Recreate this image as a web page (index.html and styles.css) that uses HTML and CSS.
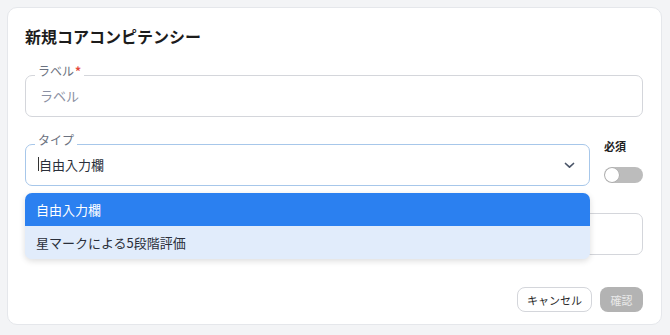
FILE: index.html
```html
<!DOCTYPE html>
<html lang="ja">
<head>
<meta charset="utf-8">
<link rel="stylesheet" href="styles.css">
</head>
<body>
<div class="card">
  <h1 class="title">新規コアコンピテンシー</h1>

  <div class="field">
    <span class="float-label">ラベル<span class="req">*</span></span>
    <span class="placeholder">ラベル</span>
  </div>

  <div class="type-row">
    <div class="field field-focus">
      <span class="float-label">タイプ</span>
      <span class="value"><span class="caret"></span>自由入力欄</span>
      <svg class="chevron" width="11" height="7" viewBox="0 0 11 7"><path d="M1.5 1.5 L5.5 5.2 L9.5 1.5" fill="none" stroke="#4a5568" stroke-width="1.7" stroke-linecap="round" stroke-linejoin="round"/></svg>
      <div class="menu">
        <div class="option option-active">自由入力欄</div>
        <div class="option option-hover">星マークによる5段階評価</div>
      </div>
    </div>
    <div class="required-col">
      <span class="required-label">必須</span>
      <span class="toggle"><span class="knob"></span></span>
    </div>
  </div>

  <div class="field field-plain"></div>

  <div class="footer">
    <button class="btn btn-cancel">キャンセル</button>
    <button class="btn btn-confirm">確認</button>
  </div>
</div>
</body>
</html>
```

FILE: styles.css
```css
* { box-sizing: border-box; }
html, body {
  margin: 0;
  padding: 0;
  background: #f3f4f6;
  font-family: "Noto Sans CJK JP", "Noto Sans", sans-serif;
}
.card {
  margin: 7px;
  width: 655px;
  height: 318px;
  background: #ffffff;
  border: 1px solid #e5e7eb;
  border-radius: 10px;
  padding: 17px 18px 12px 17px;
  display: flex;
  flex-direction: column;
}
.title {
  margin: 0 0 28px 0;
  font-size: 16px;
  line-height: 22px;
  font-weight: 700;
  color: #1c1c1c;
}
.field {
  position: relative;
  height: 42px;
  border: 1px solid #d4d6db;
  border-radius: 7px;
  display: flex;
  align-items: center;
  padding: 0 12px 2px 12px;
}
.float-label {
  position: absolute;
  top: -12px;
  left: 9px;
  background: #ffffff;
  padding: 0 3px;
  font-size: 12px;
  line-height: 14px;
  color: #6b7280;
}
.req {
  color: #e5483c;
  margin-left: 1px;
  font-weight: 700;
}
.placeholder {
  font-size: 13px;
  color: #8b90a3;
  padding-left: 2px;
}
.type-row {
  margin-top: 23px;
  display: grid;
  grid-template-columns: 1fr 39px;
  column-gap: 14px;
  align-items: start;
  position: relative;
  z-index: 2;
}
.field-focus {
  margin-top: 4px;
  border-color: #a7c7ea;
  justify-content: space-between;
}
.value {
  font-size: 13px;
  color: #2a2f3a;
  display: flex;
  align-items: center;
}
.caret {
  display: inline-block;
  width: 1px;
  height: 14px;
  background: #333;
}
.chevron {
  margin-right: 2px;
  margin-top: 2px;
}
.menu {
  position: absolute;
  top: 48px;
  left: -1px;
  right: -1px;
  border-radius: 7px;
  overflow: hidden;
  box-shadow: 0 2px 6px rgba(0, 0, 0, 0.14);
  background: #e1ecfb;
}
.option {
  height: 33px;
  display: flex;
  align-items: center;
  padding-left: 11px;
  padding-bottom: 1px;
  font-size: 13px;
}
.option-active {
  background: #2b80f0;
  color: #ffffff;
}
.option-hover {
  background: #e1ecfb;
  color: #2a2f3a;
}
.required-col {
  display: flex;
  flex-direction: column;
}
.required-label {
  font-size: 11px;
  line-height: 13px;
  font-weight: 700;
  color: #222;
}
.toggle {
  margin-top: 14px;
  width: 39px;
  height: 16px;
  border-radius: 8px;
  background: #bcbcbc;
  display: flex;
  align-items: center;
  padding-left: 1px;
}
.knob {
  width: 14px;
  height: 14px;
  border-radius: 50%;
  background: #ffffff;
  box-shadow: 0 0 0 0.5px rgba(0,0,0,0.15);
}
.field-plain {
  margin-top: 27px;
}
.footer {
  margin-top: 32px;
  display: flex;
  justify-content: flex-end;
  gap: 8px;
}
.btn {
  height: 25px;
  border-radius: 8px;
  font-family: inherit;
  font-size: 11px;
  padding: 0;
  white-space: nowrap;
  cursor: pointer;
}
.btn-cancel {
  width: 75px;
  background: #ffffff;
  border: 1px solid #d4d6db;
  color: #2a2a2a;
}
.btn-confirm {
  width: 43px;
  background: #b3b3b3;
  border: none;
  color: #e9e9e9;
}
```
